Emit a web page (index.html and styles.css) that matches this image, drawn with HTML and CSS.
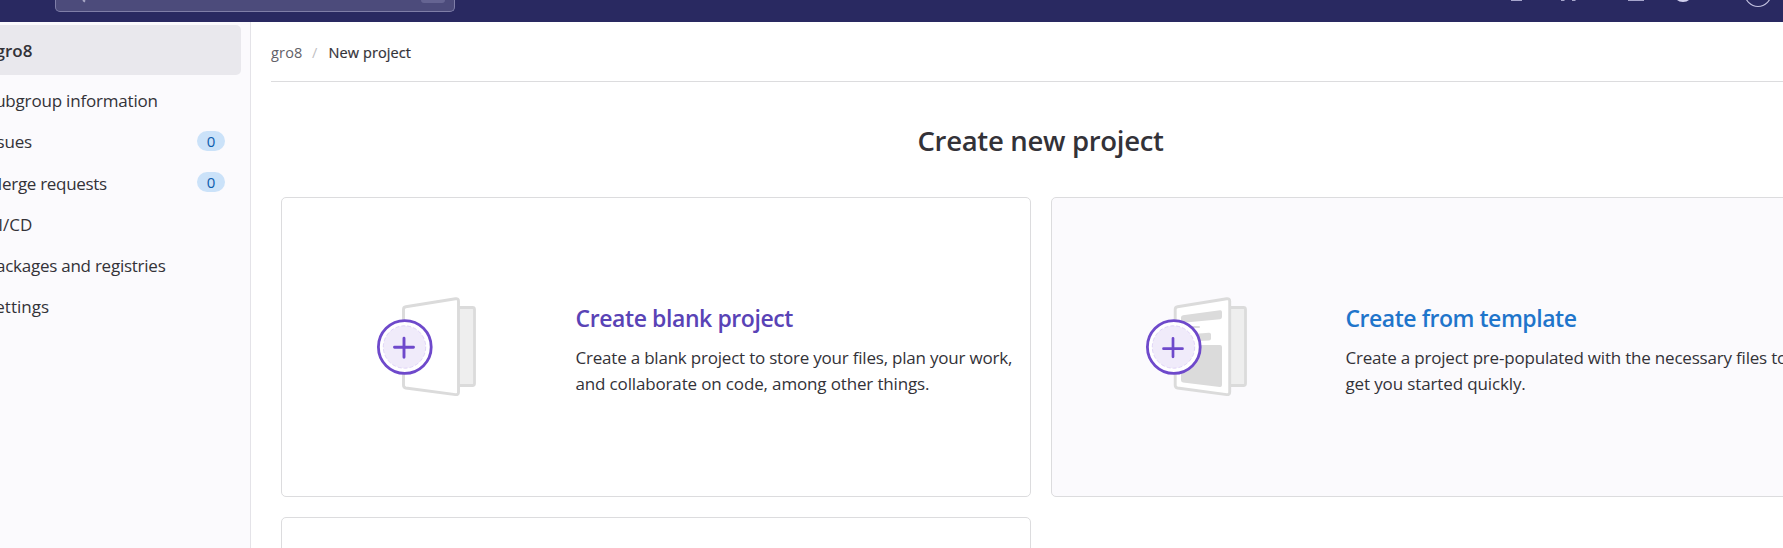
FILE: index.html
```html
<!DOCTYPE html>
<html lang="en">
<head>
<meta charset="utf-8">
<title>New project</title>
<link rel="stylesheet" href="styles.css">
</head>
<body>
<header class="topbar">
  <div class="search"><svg class="search-icon" width="8" height="3" viewBox="0 0 8 3"><path d="M3 0 5 1.6" stroke="#a9a8c6" stroke-width="2"/></svg><span class="key"></span></div>
  <svg class="tools" width="290" height="22" viewBox="0 0 290 22">
    <g fill="none" stroke="#a6a5cc" stroke-width="1.4">
      <path d="M18 .3H29M68 .3h3.5M79 .3h3.5M135 .3h16"/>
      <circle cx="265" cy="-6.5" r="13" stroke="#c3c2e0" stroke-width="1.2"/>
    </g>
    <path d="M184 0h12q-2 2-6 2t-6-2Z" fill="#d1d0ee"/>
  </svg>
</header>
<div class="page">
  <nav class="sidebar">
    <a class="context"><span class="t t-ctx">gro8</span></a>
    <a class="item"><span class="t t-sub">Subgroup information</span></a>
    <a class="item"><span class="t t-iss">Issues</span><span class="badge">0</span></a>
    <a class="item"><span class="t t-mr">Merge requests</span><span class="badge">0</span></a>
    <a class="item"><span class="t t-ci">CI/CD</span></a>
    <a class="item"><span class="t t-pkg">Packages and registries</span></a>
    <a class="item"><span class="t">Settings</span></a>
  </nav>
  <main class="content">
    <div class="crumbs"><span class="t crumb">gro8</span><span class="slash">/</span><span class="t current">New project</span></div>
    <h1 class="title">Create new project</h1>
    <div class="cards">
      <a class="card">
        <svg class="art" width="130" height="130" viewBox="0 0 130 130">
          <rect x="97" y="27.5" width="17.5" height="78" rx="2" fill="#eee" stroke="#dbdbdb" stroke-width="2.8"/>
          <path d="M43.5 29.5q0-2.3 2.3-2.7L95.5 18.8q3-.4 3 2.5V112q0 3-3 2.6L45.8 108q-2.3-.4-2.3-2.7Z" fill="#fff" stroke="#dbdbdb" stroke-width="2.9"/>
          <circle cx="44.8" cy="67" r="26.4" fill="#fff" stroke="#6e49cb" stroke-width="2.8"/>
          <circle cx="44.5" cy="67" r="21.2" fill="#f0ebfa" stroke="#dcd0f6" stroke-width=".9" stroke-dasharray="4 2"/>
          <path d="M34.5 67.3h19M44 58.3v19" stroke="#6e49cb" stroke-width="2.9" stroke-linecap="round"/>
        </svg>
        <div class="body"><h3 class="name blank">Create blank project</h3>
        <p class="desc"><span class="t t-d1">Create a blank project to store your files, plan your work,</span><br><span class="t t-d2">and collaborate on code, among other things.</span></p></div>
      </a>
      <a class="card tinted">
        <svg class="art" width="130" height="130" viewBox="0 0 130 130">
          <rect x="98" y="27.5" width="17.5" height="78" rx="2" fill="#eee" stroke="#dbdbdb" stroke-width="2.8"/>
          <path d="M45.2 29.5q0-2.3 2.3-2.7L96.7 18.8q3-.4 3 2.5V112q0 3-3 2.6L47.5 108q-2.3-.4-2.3-2.7Z" fill="#fff" stroke="#dbdbdb" stroke-width="2.9"/>
          <g fill="#dbdbdb">
            <path d="M51 37.5q0-2 2-2.3l37-4.9q2-.2 2 1.7v5q0 2-2 2.2l-37 3.6q-2 .2-2-1.8Z"/>
            <rect x="51" y="46" width="19" height="2" rx="1"/>
            <path d="M51 57q0-2 2-2.2l26-2q2-.1 2 1.7v4q0 2-2 2.1l-26 1.2Z"/>
            <path d="M51 67q0-2 2-2h37q2 0 2 2v38q0 2.3-2.2 2L53 102.6q-2-.3-2-2.3Z"/>
          </g>
          <circle cx="43.8" cy="67" r="26.4" fill="#fff" stroke="#6e49cb" stroke-width="2.8"/>
          <circle cx="43.5" cy="67" r="21.2" fill="#f0ebfa" stroke="#dcd0f6" stroke-width=".9" stroke-dasharray="4 2"/>
          <path d="M33.5 68.7h19M43 58.3v18.5" stroke="#6e49cb" stroke-width="2.7" stroke-linecap="round"/>
        </svg>
        <div class="body"><h3 class="name template">Create from template</h3>
        <p class="desc"><span class="t t-d3">Create a project pre-populated with the necessary files to</span><br><span class="t t-d4">get you started quickly.</span></p></div>
      </a>
      <a class="card"></a>
    </div>
  </main>
</div>
</body>
</html>
```
FILE: styles.css
```css
* { box-sizing: border-box; }
html { overflow: hidden; }
body { margin: 0; width: 1783px; height: 548px; overflow: hidden; background: #fff; color: #333238; font-family: "Open Sans", "Noto Sans", sans-serif; font-size: 17px; }
h1, h3, p { margin: 0; }
.t { white-space: nowrap; }
.topbar { display: flex; justify-content: space-between; height: 22px; padding-left: 55px; background: #292961; overflow: hidden; }
.tools { margin-right: 0; transform: translateX(0); }
.search { display: flex; justify-content: space-between; width: 400px; height: 12px; padding: 0 9px 0 24px; background: #4c4b7b; border: 1px solid #7f7ea8; border-top: 0; border-radius: 0 0 5px 5px; }
.key { width: 24px; height: 3px; background: #656492; border-radius: 0 0 4px 4px; }
.page { display: flex; height: 526px; overflow: hidden; }
.sidebar { width: 251px; flex: none; padding-top: 3px; background: #fbfafd; border-right: 1px solid #e4e3e8; overflow: hidden; }
.context { display: flex; align-items: center; width: 241px; height: 50px; margin-bottom: 5px; background: #e9e8ed; border-radius: 0 5px 5px 0; font-weight: 600; }
.t-ctx { margin-left: -4.5px; }
.item { display: flex; align-items: center; justify-content: space-between; height: 41.25px; padding-right: 25px; margin-left: -14px; }
.t-sub { letter-spacing: -.19px; }
.t-iss { margin-left: -2px; letter-spacing: -.18px; }
.t-mr { margin-left: 1px; letter-spacing: -.3px; }
.t-ci { margin-left: 1.5px; }
.t-pkg { letter-spacing: -.25px; }
.badge { width: 28px; height: 20px; margin-bottom: 1.5px; border-radius: 10px; background: #cbe2f9; color: #0b5cad; font-size: 15px; line-height: 20px; text-align: center; }
.content { flex: 1; min-width: 0; padding-left: 20px; }
.crumbs { display: flex; align-items: center; height: 60px; padding-top: 2px; border-bottom: 1px solid #dcdcde; font-size: 14.5px; }
.crumb { color: #626168; width: 41px; letter-spacing: .2px; }
.slash { width: 16.5px; color: #bfbfc3; }
.current { -webkit-text-stroke: .2px; letter-spacing: .1px; }
.title { height: 115px; padding-top: 39px; padding-left: 646.5px; font-size: 27.5px; font-weight: 600; line-height: 40px; letter-spacing: -.31px; }
.cards { display: grid; grid-template-columns: 750px 750px; grid-auto-rows: 300px; gap: 20px; padding-left: 10px; }
.card { display: flex; border: 1px solid #dcdcde; border-radius: 5px; }
.tinted { background: #fbfafd; }
.art { margin: 82px 85.5px 0 78px; flex: none; }
.body { padding-top: 104px; flex: none; }
.name { font-size: 23px; font-weight: 600; line-height: 32px; margin-bottom: 10.5px; letter-spacing: -.41px; }
.blank { color: #5943b6; }
.template { color: #1f75cb; letter-spacing: -.47px; }
.desc { line-height: 26px; }
.t-d1 { letter-spacing: -.21px; }
.t-d2 { letter-spacing: -.15px; }
.t-d3 { letter-spacing: -.2px; }
.t-d4 { letter-spacing: -.13px; }
```
